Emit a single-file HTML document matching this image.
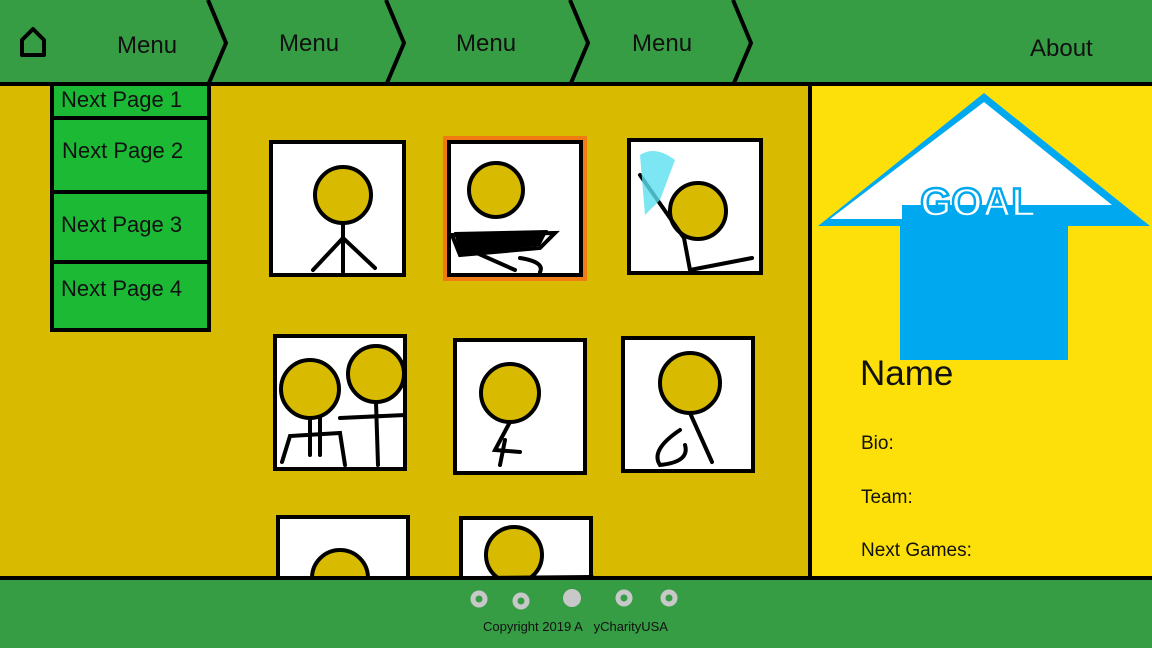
<!DOCTYPE html>
<html><head><meta charset="utf-8"><style>
*{margin:0;padding:0;box-sizing:border-box}
body{width:1152px;height:648px;overflow:hidden;position:relative;font-family:"Liberation Sans",sans-serif;background:#d8bb00}
.t{position:absolute;color:#111;white-space:nowrap}
</style></head><body>
<svg width="1152" height="648" style="position:absolute;left:0;top:0">
<rect x="0" y="0" width="1152" height="84" fill="#369d45"/>
<rect x="0" y="84" width="1152" height="494" fill="#d8bb00"/>
<rect x="811" y="84" width="341" height="494" fill="#fde00a"/>
<g stroke="#000" stroke-width="4" fill="none">
<path d="M208 0 L226 43 L209 83"/>
<path d="M386 0 L404 43 L387 83"/>
<path d="M570 0 L588 43 L571 83"/>
<path d="M733 0 L751 43 L734 83"/>
</g>
<path d="M22 40 L33 29 L44 40 L44 55 L22 55 Z" fill="none" stroke="#000" stroke-width="4" stroke-linejoin="round"/>
<g fill="#1cb935" stroke="#000" stroke-width="4">
<rect x="52" y="84" width="157" height="34"/>
<rect x="52" y="118" width="157" height="74"/>
<rect x="52" y="192" width="157" height="70"/>
<rect x="52" y="262" width="157" height="68"/>
</g>
<rect x="443" y="136" width="144" height="145" fill="#f07a14"/>
<g stroke="#000" stroke-width="4" fill="#fff">
<rect x="271" y="142" width="133" height="133"/>
<rect x="449" y="142" width="132" height="133"/>
<rect x="629" y="140" width="132" height="133"/>
<rect x="275" y="336" width="130" height="133"/>
<rect x="455" y="340" width="130" height="133"/>
<rect x="623" y="338" width="130" height="133"/>
<rect x="278" y="517" width="130" height="70"/>
<rect x="461" y="518" width="130" height="70"/>
</g>
<g stroke="#000" stroke-width="4" fill="#d8bb00">
<circle cx="343" cy="195" r="28"/>
<circle cx="496" cy="190" r="27"/>
<circle cx="698" cy="211" r="28"/>
<circle cx="310" cy="389" r="29"/>
<circle cx="376" cy="374" r="28"/>
<circle cx="510" cy="393" r="29"/>
<circle cx="690" cy="383" r="30"/>
<circle cx="340" cy="578" r="28"/>
<circle cx="514" cy="555" r="28"/>
</g>
<g stroke="#000" stroke-width="4" fill="none" stroke-linecap="round">
<path d="M343 223 V272 M343 238 L313 270 M343 238 L375 268"/>
<path d="M452 235 L555 233 L540 248 L460 255 Z M470 250 L515 270 M520 258 Q545 262 540 272"/>
<path d="M684 238 L690 270 M690 270 L752 258 M640 175 L684 238"/>
<path d="M282 462 L290 436 L340 433 L345 465 M310 418 V455 M320 418 V455 M340 418 L405 415 M376 402 L378 465"/>
<path d="M510 422 L495 450 L520 452 M505 440 L500 465"/>
<path d="M690 413 L712 462 M680 430 Q650 450 660 465 Q690 462 685 445"/>
<path d="M480 578 L592 577"/>
</g>
<path d="M454 232 L548 230 L540 246 L460 254 Z" fill="#000"/>
<path d="M640 155 Q655 145 675 160 L660 200 L645 215 Z" fill="#5ce0f0" opacity="0.8"/>
<rect x="0" y="578" width="1152" height="70" fill="#369d45"/>
<rect x="0" y="82" width="1152" height="4" fill="#000"/>
<rect x="0" y="576" width="1152" height="4" fill="#000"/>
<rect x="808" y="84" width="4" height="494" fill="#000"/>
<rect x="900" y="214" width="168" height="146" fill="#00a8ef"/>
<path d="M818 226 L984 93 L1150 226 Z" fill="#00a8ef"/>
<path d="M830 219 L984 102 L1112 205 L1040 205 L1040 219 Z" fill="#fff"/>
<path d="M902 205 L1040 205 L1040 219 L902 219 Z" fill="#00a8ef"/>
<text x="978" y="216" text-anchor="middle" font-family="Liberation Sans" font-weight="bold" font-size="40" fill="#fff" stroke="#00a8ef" stroke-width="2.5">GOAL</text>
<g fill="none" stroke="#c8c8c8" stroke-width="5">
<circle cx="479" cy="599" r="6"/><circle cx="521" cy="601" r="6"/>
<circle cx="624" cy="598" r="6"/><circle cx="669" cy="598" r="6"/>
</g>
<circle cx="572" cy="598" r="9" fill="#c8c8c8"/>
</svg>
<div class="t" style="left:117px;top:32px;font-size:24px">Menu</div>
<div class="t" style="left:279px;top:30px;font-size:24px">Menu</div>
<div class="t" style="left:456px;top:30px;font-size:24px">Menu</div>
<div class="t" style="left:632px;top:30px;font-size:24px">Menu</div>
<div class="t" style="left:1030px;top:35px;font-size:24px">About</div>
<div class="t" style="left:61px;top:87px;font-size:22px">Next Page 1</div>
<div class="t" style="left:62px;top:138px;font-size:22px">Next Page 2</div>
<div class="t" style="left:61px;top:212px;font-size:22px">Next Page 3</div>
<div class="t" style="left:61px;top:276px;font-size:22px">Next Page 4</div>
<div class="t" style="left:860px;top:354px;font-size:35px">Name</div>
<div class="t" style="left:861px;top:433px;font-size:19px">Bio:</div>
<div class="t" style="left:861px;top:487px;font-size:19px">Team:</div>
<div class="t" style="left:861px;top:540px;font-size:19px">Next Games:</div>
<div class="t" style="left:483px;top:619px;font-size:13px">Copyright 2019 A&nbsp;&nbsp;&nbsp;yCharityUSA</div>
</body></html>
